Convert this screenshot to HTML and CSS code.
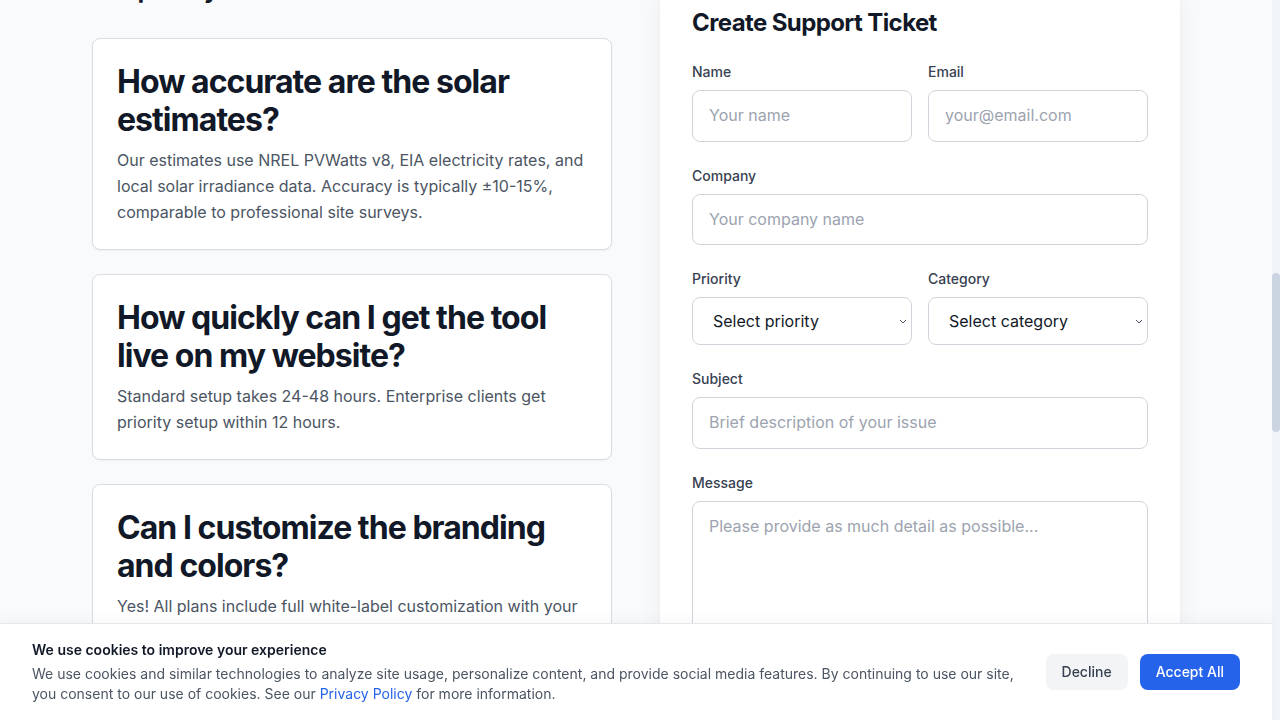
FILE: index.html
```html
<!DOCTYPE html>
<html lang="en">
<head>
<meta charset="utf-8">
<title>Support Center</title>
<link rel="stylesheet" href="styles.css">
</head>
<body>
<div class="page" id="page">
<header class="site-header">
  <div class="container header-inner">
    <span class="brand">SolarQuote</span>
    <nav class="nav"><a href="#">Pricing</a><a href="#">Docs</a><a href="#">Support</a></nav>
  </div>
</header>

<section class="hero">
  <div class="container">
    <h1 class="hero-title">How can we help?</h1>
    <p class="hero-text">Get answers to common questions or open a ticket with our support team.</p>
  </div>
</section>

<section class="options">
  <div class="container options-grid">
    <div class="option-card"><h3>Documentation</h3><p>Guides for installing and configuring the calculator.</p></div>
    <div class="option-card"><h3>Live Chat</h3><p>Talk to our team Monday to Friday, 9am to 6pm.</p></div>
    <div class="option-card"><h3>Email</h3><p>Reach us any time and we will reply within a day.</p></div>
  </div>
</section>

<main class="main">
  <div class="container support-grid">
    <div class="faq-col">
      <h2 class="section-title">Frequently Asked Questions</h2>
      <div class="faq-list">
        <div class="faq-card" id="first-faq">
          <h3 class="faq-q">How accurate are the solar estimates?</h3>
          <p class="faq-a">Our estimates use NREL PVWatts v8, EIA electricity rates, and local solar irradiance data. Accuracy is typically ±10-15%, comparable to professional site surveys.</p>
        </div>
        <div class="faq-card">
          <h3 class="faq-q">How quickly can I get the tool live on my website?</h3>
          <p class="faq-a">Standard setup takes 24-48 hours. Enterprise clients get priority setup within 12 hours.</p>
        </div>
        <div class="faq-card">
          <h3 class="faq-q">Can I customize the branding and colors?</h3>
          <p class="faq-a">Yes! All plans include full white-label customization with your logo, colors, and fonts so the calculator matches your brand.</p>
        </div>
        <div class="faq-card">
          <h3 class="faq-q">Do you integrate with my CRM?</h3>
          <p class="faq-a">We support Salesforce, HubSpot, and webhooks so leads arrive wherever your team works.</p>
        </div>
        <div class="faq-card">
          <h3 class="faq-q">Is there a free trial?</h3>
          <p class="faq-a">Every plan starts with a 14-day free trial. No credit card is required.</p>
        </div>
      </div>
    </div>

    <div class="form-card">
      <h2 class="form-title">Create Support Ticket</h2>
      <form class="form">
        <div class="row">
          <div class="field"><label class="label">Name</label><input class="input" type="text" placeholder="Your name"></div>
          <div class="field"><label class="label">Email</label><input class="input" type="email" placeholder="your@email.com"></div>
        </div>
        <div class="field"><label class="label">Company</label><input class="input" type="text" placeholder="Your company name"></div>
        <div class="row">
          <div class="field"><label class="label">Priority</label>
            <select class="select"><option>Select priority</option><option>Low</option><option>Medium</option><option>High</option></select>
          </div>
          <div class="field"><label class="label">Category</label>
            <select class="select"><option>Select category</option><option>Billing</option><option>Technical</option><option>Other</option></select>
          </div>
        </div>
        <div class="field"><label class="label">Subject</label><input class="input" type="text" placeholder="Brief description of your issue"></div>
        <div class="field"><label class="label">Message</label><textarea class="input textarea" rows="6" placeholder="Please provide as much detail as possible..."></textarea></div>
        <button class="submit" type="button">Submit Ticket</button>
      </form>
    </div>
  </div>
</main>

<footer class="footer">
  <div class="container"><p>© 2024 SolarQuote. All rights reserved.</p></div>
</footer>
</div>

<div class="scrollbar" aria-hidden="true"><div class="scrollbar-thumb" id="thumb"></div></div>

<div class="cookie-banner">
  <div class="cookie-text">
    <p class="cookie-title">We use cookies to improve your experience</p>
    <p class="cookie-desc">We use cookies and similar technologies to analyze site usage, personalize content, and provide social media features. By continuing to use our site, you consent to our use of cookies. See our <a href="#" class="cookie-link">Privacy Policy</a> for more information.</p>
  </div>
  <div class="cookie-actions">
    <button class="btn btn-decline" type="button">Decline</button>
    <button class="btn btn-accept" type="button">Accept All</button>
  </div>
</div>
<script src="script.js"></script>
</body>
</html>
```

FILE: styles.css
```css
* { box-sizing: border-box; }
html, body { height: 100%; overflow: hidden; }
body {
  margin: 0;
  display: flex;
  background: #f9fafb;
  font-family: Inter, "Noto Sans", sans-serif;
  color: #111827;
}
.page {
  flex: 1;
  min-width: 0;
  height: 100vh;
  overflow-y: scroll;
  scrollbar-width: none;
}
.page::-webkit-scrollbar { display: none; }
.scrollbar {
  width: 8px;
  height: 100vh;
  flex-shrink: 0;
  background: #f1f5f9;
}
.scrollbar-thumb {
  width: 8px;
  height: 158px;
  margin-top: 270px;
  background: #cbd5e1;
  border-radius: 4px;
}

.container { max-width: 1152px; margin: 0 auto; padding: 0 32px; }
.site-header { height: 64px; background: #fff; border-bottom: 1px solid #e5e7eb; }
.header-inner { height: 64px; display: flex; align-items: center; justify-content: space-between; }
.brand { font-weight: 700; font-size: 20px; }
.nav { display: flex; gap: 24px; }
.nav a { color: #4b5563; text-decoration: none; font-size: 14px; }
.hero { min-height: 520px; padding: 120px 0; text-align: center; }
.hero-title { font-size: 48px; margin: 0 0 16px; }
.hero-text { font-size: 18px; color: #4b5563; margin: 0; }
.options { min-height: 555px; padding: 64px 0; }
.options-grid { display: grid; grid-template-columns: repeat(3, 1fr); gap: 24px; }
.option-card { background: #fff; border: 1px solid #e5e7eb; border-radius: 8px; padding: 24px; }
.option-card h3 { margin: 0 0 8px; font-size: 18px; }
.option-card p { margin: 0; color: #4b5563; }

.main { padding: 64px 0; }
.support-grid { display: grid; grid-template-columns: 1fr 1fr; gap: 48px; align-items: start; }
.section-title { font-size: 24px; line-height: 32px; font-weight: 700; margin: 0 0 32px; color: #111827; }
.faq-list { display: flex; flex-direction: column; gap: 24px; }
.faq-card {
  background: #fff;
  border: 1px solid #d9dce1;
  border-radius: 8px;
  padding: 24px;
  box-shadow: 0 1px 2px rgba(0,0,0,0.04);
}
.faq-q {
  margin: 0 0 8px;
  font-size: 32px;
  line-height: 38px;
  font-weight: 700;
  letter-spacing: -0.03em;
  color: #111827;
}
.faq-a { margin: 0; font-size: 16px; line-height: 26px; color: #4b5563; }

.form-card {
  background: #fff;
  border-radius: 12px;
  padding: 33px 32px 32px;
  box-shadow: 0 10px 30px -6px rgba(0,0,0,0.08), 0 4px 10px -4px rgba(0,0,0,0.05);
}
.form-title { margin: 0 0 23px; font-size: 24px; line-height: 32px; font-weight: 700; letter-spacing: -0.025em; color: #111827; }
.form { display: flex; flex-direction: column; gap: 24px; }
.row { display: grid; grid-template-columns: 1fr 1fr; gap: 16px; }
.field { display: flex; flex-direction: column; }
.label { font-size: 14px; line-height: 20px; font-weight: 500; color: #374151; margin-bottom: 8px; }
.input {
  width: 100%;
  font-family: inherit;
  font-size: 16px;
  line-height: 25.5px;
  padding: 12px 16px;
  border: 1px solid #d1d5db;
  border-radius: 8px;
  background: #fff;
  color: #111827;
}
.input::placeholder { color: #9ca3af; }
.textarea { resize: vertical; display: block; }
.select {
  width: 100%;
  height: 48px;
  font-family: inherit;
  font-size: 16px;
  padding: 0 28px 0 20px;
  border: 1px solid #d1d5db;
  border-radius: 8px;
  color: #111827;
  -webkit-appearance: none;
  appearance: none;
  background: #fff url("data:image/svg+xml,%3Csvg xmlns='http://www.w3.org/2000/svg' width='8' height='5' viewBox='0 0 8 5'%3E%3Cpath d='M1 1 L4 4 L7 1' fill='none' stroke='%234b5563' stroke-width='1'/%3E%3C/svg%3E") no-repeat right 4px center;
}
.submit {
  font-family: inherit; font-size: 16px; font-weight: 600;
  background: #2563eb; color: #fff; border: 0; border-radius: 8px; padding: 12px 24px;
}

.footer { min-height: 940px; padding: 64px 0; color: #6b7280; font-size: 14px; }

.cookie-banner {
  position: fixed;
  left: 0; right: 8px; bottom: 0;
  background: #fff;
  border-top: 1px solid #e5e7eb;
  box-shadow: 0 -4px 12px rgba(0,0,0,0.03);
  padding: 16px 32px;
  display: flex;
  align-items: center;
  gap: 24px;
  z-index: 10;
}
.cookie-text { flex: 1; }
.cookie-title { margin: 0 0 4px; font-size: 14px; line-height: 20px; font-weight: 600; color: #111827; }
.cookie-desc { margin: 0; font-size: 14px; line-height: 20px; color: #4b5563; }
.cookie-link { color: #2563eb; text-decoration: none; }
.cookie-actions { display: flex; gap: 12px; flex-shrink: 0; }
.btn {
  font-family: inherit;
  font-size: 14px;
  line-height: 20px;
  font-weight: 500;
  padding: 8px 16px;
  border: 0;
  border-radius: 8px;
}
.btn-decline { background: #f3f4f6; color: #374151; }
.btn-accept { background: #2563eb; color: #fff; }
```

FILE: script.js
```js
(function () {
  function go() {
    var page = document.getElementById('page');
    var c = document.getElementById('first-faq');
    var delta = c.getBoundingClientRect().top - 38;
    page.scrollTop = page.scrollTop + delta;
    var track = window.innerHeight;
    var h = page.clientHeight / page.scrollHeight * track;
    var t = page.scrollTop / page.scrollHeight * track;
    var thumb = document.getElementById('thumb');
    thumb.style.height = h + 'px';
    thumb.style.marginTop = t + 'px';
  }
  go();
  window.addEventListener('load', go);
})();
```
